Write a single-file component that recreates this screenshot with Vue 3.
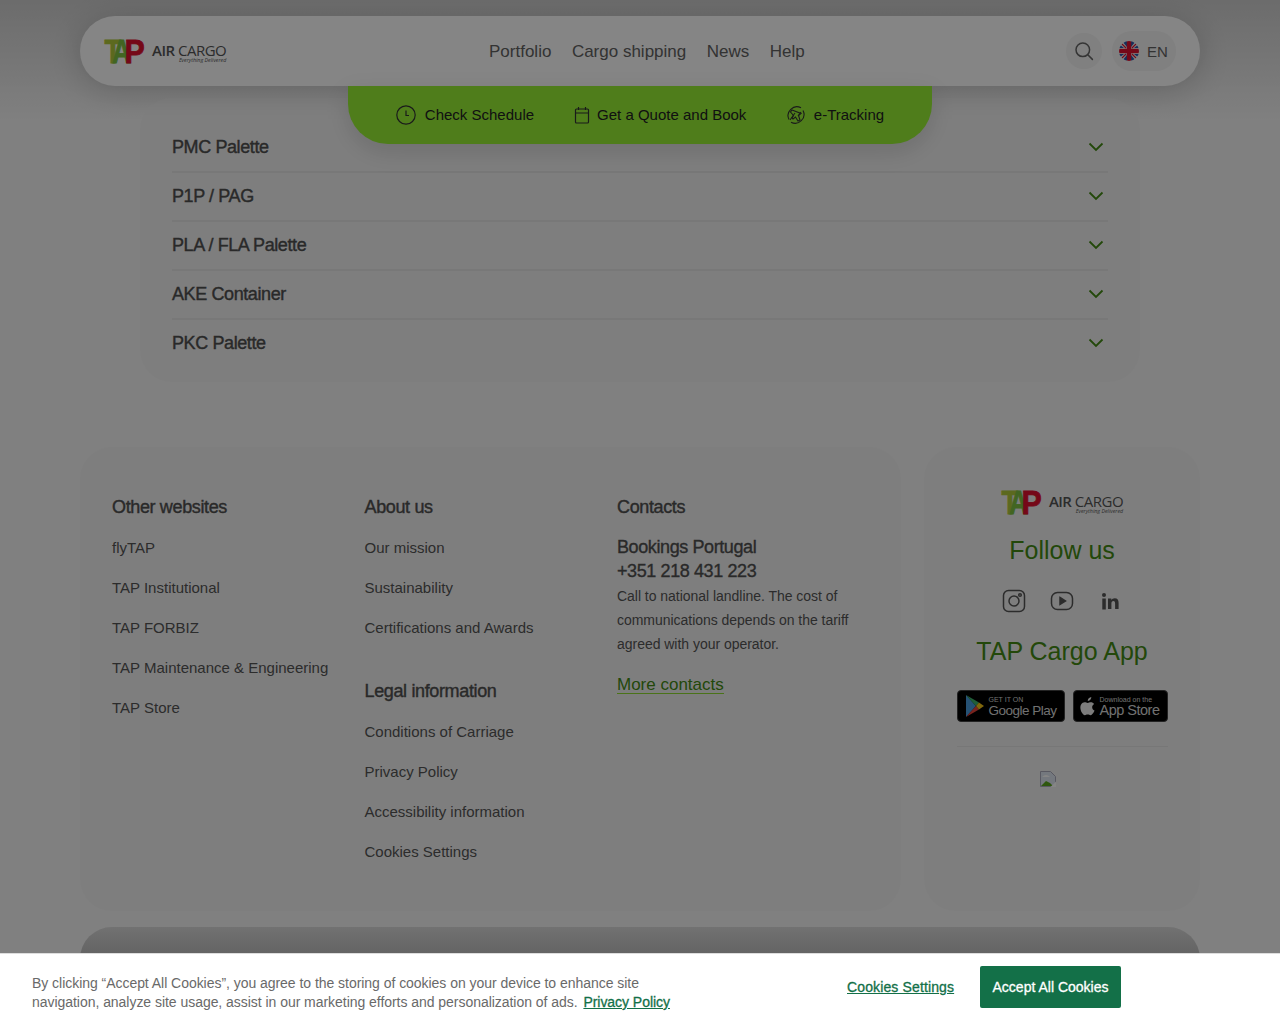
<script setup>
const navLinks = ['Portfolio', 'Cargo shipping', 'News', 'Help']
const accordion = ['PMC Palette', 'P1P / PAG', 'PLA / FLA Palette', 'AKE Container', 'PKC Palette']
const otherSites = ['flyTAP', 'TAP Institutional', 'TAP FORBIZ', 'TAP Maintenance & Engineering', 'TAP Store']
const about = ['Our mission', 'Sustainability', 'Certifications and Awards']
const legal = ['Conditions of Carriage', 'Privacy Policy', 'Accessibility information', 'Cookies Settings']
</script>

<template>
  <div class="page">
    <header class="topbar">
      <a class="logo">
        <svg class="logo-mark" viewBox="0 0 44 25" width="44" height="25">
          <text transform="translate(0.500 24.300) scale(.84 1)" class="mark t">T</text>
          <text transform="translate(8 24.300) scale(.8 1)" class="mark a">A</text>
          <text transform="translate(20.500 24.300) scale(.92 1)" class="mark p">P</text>
        </svg>
        <span class="logo-text">
          <span class="logo-name"><b>AIR</b> CARGO</span>
          <i class="logo-tag">Everything Delivered</i>
        </span>
      </a>
      <nav class="nav">
        <a v-for="l in navLinks" :key="l">{{ l }}</a>
      </nav>
      <div class="tools">
        <span class="search">
          <svg width="20" height="20" viewBox="0 0 20 20" fill="none" stroke="#666" stroke-width="1.5" stroke-linecap="round">
            <circle cx="8.800" cy="8.800" r="6.800" />
            <path d="M13.800 13.800l4.600 4.600" />
          </svg>
        </span>
        <span class="lang">
          <svg width="20" height="20" viewBox="0 0 20 20">
            <defs><clipPath id="flagclip"><circle cx="10" cy="10" r="10" /></clipPath></defs>
            <g clip-path="url(#flagclip)">
              <rect width="20" height="20" fill="#f4f4f4" />
              <path d="M3 0h5v6zM12 0h5l-5 6zM0 3l5 4H0zM20 3v4h-5zM0 13h5l-5 4zM15 13h5v4zM8 20H3l5-6zM12 20v-6l5 6z" fill="#2a5bb0" />
              <path d="M0 0l7 7M20 0l-7 7M0 20l7-7M20 20l-7-7" stroke="#e0102f" stroke-width="1.200" />
              <rect x="7.800" width="4.400" height="20" fill="#e0102f" />
              <rect y="7.800" width="20" height="4.400" fill="#e0102f" />
            </g>
          </svg>
          <span>EN</span>
        </span>
      </div>
      <div class="quick">
        <a>
          <svg width="20" height="20" viewBox="0 0 20 20" fill="none" stroke="#333" stroke-width="1.200">
            <circle cx="10" cy="10" r="9.200" />
            <path d="M10 5.500V10.500H13" />
          </svg>
          Check Schedule
        </a>
        <a>
          <svg width="16" height="18" viewBox="0 0 16 18" fill="none" stroke="#333" stroke-width="1.200">
            <rect x="1.500" y="3" width="13" height="14" rx="1" />
            <path d="M1.500 7h13M4.500 1v3M11.500 1v3" />
          </svg>
          Get a Quote and Book
        </a>
        <a>
          <svg width="20" height="20" viewBox="0 0 20 20" fill="none" stroke="#333" stroke-width="1.100">
            <path d="M3 14.500A8.800 8.800 0 0 1 15 2.800M17 5.500A8.800 8.800 0 0 1 5 17.200" />
            <path d="M6 5l9 3.500-2.500 2 1.500 4.500-2 1-2.500-4-2.500 2-1-1 1.500-2.500-3-3.500z" />
            <path d="M9 8l-5 7M12 11l3-4" />
          </svg>
          e-Tracking
        </a>
      </div>
    </header>

    <section class="accordion">
      <div v-for="item in accordion" :key="item" class="acc-row">
        <span>{{ item }}</span>
        <svg width="16" height="10" viewBox="0 0 16 10" fill="none" stroke="#438a14" stroke-width="1.800">
          <path d="M1.500 1.500L8 8l6.500-6.500" />
        </svg>
      </div>
    </section>

    <footer class="footer">
      <div class="foot-links">
        <div class="col">
          <h4>Other websites</h4>
          <a v-for="l in otherSites" :key="l">{{ l }}</a>
        </div>
        <div class="col">
          <h4>About us</h4>
          <a v-for="l in about" :key="l">{{ l }}</a>
          <h4 class="second">Legal information</h4>
          <a v-for="l in legal" :key="l">{{ l }}</a>
        </div>
        <div class="col">
          <h4>Contacts</h4>
          <div class="booking">Bookings Portugal<br />+351 218 431 223</div>
          <p class="note">Call to national landline. The cost of communications depends on the tariff agreed with your operator.</p>
          <a class="more">More contacts</a>
        </div>
      </div>
      <div class="foot-social">
        <a class="logo">
          <svg class="logo-mark" viewBox="0 0 44 25" width="44" height="25">
            <text transform="translate(0.500 24.300) scale(.84 1)" class="mark t">T</text>
            <text transform="translate(8 24.300) scale(.8 1)" class="mark a">A</text>
            <text transform="translate(20.500 24.300) scale(.92 1)" class="mark p">P</text>
          </svg>
          <span class="logo-text">
            <span class="logo-name"><b>AIR</b> CARGO</span>
            <i class="logo-tag">Everything Delivered</i>
          </span>
        </a>
        <h3 class="follow">Follow us</h3>
        <div class="social">
          <svg width="24" height="24" viewBox="0 0 24 24" fill="none" stroke="#555" stroke-width="1.500">
            <rect x="1.500" y="1.500" width="21" height="21" rx="5" />
            <circle cx="12" cy="12" r="5" />
            <circle cx="18" cy="6" r="1.300" />
          </svg>
          <svg width="24" height="24" viewBox="0 0 24 24" fill="none" stroke="#555" stroke-width="1.500">
            <rect x="1.500" y="3.500" width="21" height="17" rx="6" />
            <path d="M10 8.500l5.500 3.500-5.500 3.500z" fill="#555" />
          </svg>
          <svg width="24" height="24" viewBox="0 0 24 24" fill="#555">
            <circle cx="6" cy="6" r="2" />
            <rect x="4.300" y="9.500" width="3.500" height="11" />
            <path d="M10 9.500h3.300v1.500c.7-1.100 1.900-1.800 3.400-1.800 2.900 0 3.900 1.900 3.900 4.700v6.100h-3.500v-5.500c0-1.400-.4-2.400-1.700-2.400s-2 1-2 2.400v5.500H10z" />
          </svg>
        </div>
        <h3 class="app-title">TAP Cargo App</h3>
        <div class="badges">
          <a class="badge play">
            <svg width="20" height="24" viewBox="0 0 20 24">
              <path d="M1 1l10 11L1 23z" fill="#4a9de0" />
              <path d="M1 1l13 7.500L11 12z" fill="#3fb56b" />
              <path d="M1 23l13-7.500L11 12z" fill="#e8453c" />
              <path d="M14 8.500l5 3.500-5 3.500-3-3.500z" fill="#f5c518" />
            </svg>
            <span class="badge-text"><small>GET IT ON</small><b>Google Play</b></span>
          </a>
          <a class="badge store">
            <svg width="16" height="20" viewBox="0 0 16 20" fill="#eee">
              <path d="M11.300 1c.1 1-.3 2-1 2.700-.6.700-1.600 1.300-2.500 1.200-.1-1 .4-2 1-2.600C9.500 1.600 10.500 1.100 11.300 1zM14.500 14.600c-.4 1-.6 1.400-1.100 2.200-.7 1.100-1.700 2.400-2.900 2.400-1.100 0-1.400-.7-2.800-.7s-1.800.7-2.800.7c-1.200 0-2.100-1.200-2.800-2.300C.1 13.900-.1 10.300 1.100 8.400c.9-1.300 2.200-2.100 3.500-2.100s2.100.7 3.100.7 1.700-.7 3.200-.7c1.200 0 2.400.6 3.200 1.700-2.800 1.600-2.400 5.500.4 6.600z" />
            </svg>
            <span class="badge-text"><small>Download on the</small><b>App Store</b></span>
          </a>
        </div>
        <div class="divider"></div>
        <svg class="broken" width="16" height="16" viewBox="0 0 16 16">
          <path d="M.5.500h10l5 5v10H.500z" fill="#dfe6f2" stroke="#aab" stroke-width="1" />
          <path d="M1 15l5-5 4 2 3 3z" fill="#5aa81c" />
          <path d="M2 6q4-4 8 0z" fill="#fff" />
          <path d="M10.500 16L16 10.500V16z" fill="#fff" />
        </svg>
      </div>
    </footer>
    <div class="bottom-bar"></div>

    <div class="overlay"></div>

    <div class="cookies">
      <p>By clicking “Accept All Cookies”, you agree to the storing of cookies on your device to enhance site navigation, analyze site usage, assist in our marketing efforts and personalization of ads. <a>Privacy Policy</a></p>
      <a class="settings">Cookies Settings</a>
      <button class="accept">Accept All Cookies</button>
    </div>
  </div>
</template>

<style>
html, body {
  margin: 0;
  background: #f5f5f5;
}
</style>

<style scoped>
.page {
  position: relative;
  height: 1024px;
  overflow: hidden;
  padding-top: 98px;
  box-sizing: border-box;
  font-family: "Liberation Sans", Arial, sans-serif;
  background: linear-gradient(#cfcfcf, #f5f5f5 120px);
}

a {
  cursor: pointer;
}

.topbar {
  position: absolute;
  top: 16px;
  left: 80px;
  width: 1120px;
  height: 70px;
  box-sizing: border-box;
  padding: 0 24px;
  display: flex;
  align-items: center;
  border-radius: 35px;
  background: #fff;
  box-shadow: 0 4px 30px rgba(0, 0, 0, 0.18);
  z-index: 2;
}

.logo {
  display: flex;
  align-items: flex-start;
  gap: 4px;
}

.logo-mark {
  display: block;
  overflow: visible;
}

.mark {
  font-family: "Liberation Sans", Arial, sans-serif;
  font-weight: 700;
  font-size: 33px;
  stroke-width: 0.8px;
}

.mark.t {
  fill: #b0c93a;
  stroke: #b0c93a;
}

.mark.a {
  fill: #7fc241;
  stroke: #7fc241;
}

.mark.p {
  fill: #e0102f;
  stroke: #e0102f;
}

.logo-text {
  display: flex;
  flex-direction: column;
  font-family: "Open Sans", sans-serif;
  color: #555;
  padding-top: 3px;
}

.logo-name {
  font-size: 15px;
  line-height: 17px;
  letter-spacing: -0.5px;
  white-space: nowrap;
}

.logo-name b {
  font-weight: 600;
}

.logo-tag {
  align-self: flex-end;
  font-size: 5.300px;
  line-height: 6px;
  margin-top: -2px;
}

.nav {
  position: absolute;
  left: 409px;
  top: 0;
  height: 70px;
  padding-top: 2px;
  box-sizing: border-box;
  display: flex;
  align-items: center;
  gap: 20.500px;
  font-size: 17px;
  color: #626262;
}

.tools {
  margin-left: auto;
  display: flex;
  align-items: center;
  gap: 10px;
}

.search {
  width: 36px;
  height: 36px;
  border-radius: 50%;
  background: #f5f5f5;
  display: flex;
  align-items: center;
  justify-content: center;
}

.lang {
  height: 40px;
  width: 64px;
  box-sizing: border-box;
  padding-left: 7px;
  border-radius: 20px;
  background: #f5f5f5;
  display: flex;
  align-items: center;
  gap: 8px;
  font-size: 15px;
  color: #626262;
}

.quick {
  position: absolute;
  top: 70px;
  left: 268px;
  width: 584px;
  height: 58px;
  box-sizing: border-box;
  padding-bottom: 1px;
  display: flex;
  align-items: center;
  justify-content: center;
  gap: 39.500px;
  border-radius: 0 0 40px 40px;
  background: #97f035;
  box-shadow: 0 8px 24px rgba(0, 0, 0, 0.12);
  font-size: 15px;
  color: #222;
}

.quick a {
  display: flex;
  align-items: center;
  gap: 8px;
}

.quick a:first-child {
  gap: 9px;
}

.quick a:nth-child(2) {
  gap: 7.500px;
}

.quick svg {
  flex: none;
}

.accordion {
  width: 1000px;
  box-sizing: border-box;
  margin: 0 auto;
  padding: 26px 32px 12px;
  border-radius: 32px;
  background: #f2f2f2;
  height: 284px;
}

.acc-row {
  height: 49px;
  box-sizing: border-box;
  display: flex;
  align-items: center;
  justify-content: space-between;
  padding-right: 4px;
  border-bottom: 2px solid #e6e6e6;
  font-size: 18px;
  letter-spacing: -0.4px;
  color: #505050;
  -webkit-text-stroke: 0.4px #505050;
}

.acc-row svg {
  margin-bottom: 2px;
}

.acc-row:last-child {
  border-bottom-color: transparent;
}

.footer {
  margin: 65px 80px 0;
  display: flex;
  gap: 23px;
  height: 464px;
}

.foot-links {
  width: 821px;
  box-sizing: border-box;
  padding: 50px 32px 0;
  display: flex;
  border-radius: 32px;
  background: #f2f2f2;
}

.col {
  width: 252.500px;
  flex: none;
  display: flex;
  flex-direction: column;
  align-items: flex-start;
  color: #555;
  padding-right: 6px;
  box-sizing: border-box;
}

.col h4 {
  margin: 0 0 10px;
  height: 21px;
  line-height: 21px;
  font-size: 18px;
  font-weight: 400;
  letter-spacing: -0.36px;
  color: #505050;
  -webkit-text-stroke: 0.4px #505050;
}

.col h4.second {
  margin-top: 33px;
}

.col a {
  height: 40px;
  line-height: 40px;
  font-size: 15px;
  white-space: nowrap;
}

.booking {
  font-size: 18px;
  line-height: 24px;
  letter-spacing: -0.4px;
  color: #505050;
  -webkit-text-stroke: 0.35px #505050;
  margin-top: 7px;
}

.note {
  margin: 1px 0 0;
  font-size: 14px;
  line-height: 24px;
  letter-spacing: -0.03px;
}

.col a.more {
  margin-top: 19px;
  height: 18px;
  line-height: 20px;
  font-size: 17px;
  color: #438a14;
  border-bottom: 1px solid #8fdc2e;
}

.foot-social {
  width: 276px;
  box-sizing: border-box;
  padding: 43px 33px 0;
  display: flex;
  flex-direction: column;
  align-items: center;
  border-radius: 32px;
  background: #f2f2f2;
}

.follow,
.app-title {
  margin: 0;
  font-size: 25px;
  line-height: 30px;
  font-weight: 400;
  color: #438a14;
}

.follow {
  margin-top: 20px;
}

.social {
  margin-top: 24px;
  display: flex;
  gap: 24px;
}

.app-title {
  margin-top: 23px;
}

.badges {
  margin-top: 24px;
  display: flex;
  gap: 8px;
  width: 211px;
}

.badge {
  height: 32px;
  box-sizing: border-box;
  border-radius: 4px;
  background: #000;
  border: 1px solid #444;
  display: flex;
  align-items: center;
  color: #d8d8d8;
}

.badge.play {
  width: 108px;
  gap: 4px;
  padding-left: 7px;
}

.badge.store {
  width: 95px;
  gap: 4px;
  padding-left: 6px;
}

.badge-text {
  display: flex;
  flex-direction: column;
  white-space: nowrap;
}

.badge-text small {
  font-size: 7px;
  line-height: 7px;
  margin-top: 2px;
}

.badge-text b {
  font-weight: 400;
  font-size: 14.500px;
  line-height: 15px;
  letter-spacing: -0.5px;
}

.badge.play b {
  font-size: 13.500px;
}

.divider {
  margin-top: 24px;
  width: 211px;
  height: 1px;
  background: #e4e4e4;
}

.broken {
  margin-top: 24px;
  margin-right: 29px;
}

.bottom-bar {
  margin: 16px 80px 0;
  height: 120px;
  border-radius: 32px 32px 0 0;
  background: linear-gradient(#dadada, #bcbcbc 30px);
}

.overlay {
  position: absolute;
  inset: 0;
  background: rgba(0, 0, 0, 0.48);
  z-index: 5;
}

.cookies {
  position: absolute;
  left: 0;
  right: 0;
  bottom: 0;
  height: 71px;
  box-sizing: border-box;
  background: #fff;
  z-index: 6;
  border-top: 1px solid #ddd;
}

.cookies p {
  position: absolute;
  left: 32px;
  top: 20px;
  width: 660px;
  margin: 0;
  font-size: 14px;
  line-height: 19px;
  letter-spacing: -0.04px;
  color: #696969;
}

.cookies p a {
  margin-left: 2px;
  color: #137048;
  text-decoration: underline;
  -webkit-text-stroke: 0.3px #137048;
}

.settings {
  position: absolute;
  left: 847px;
  top: 24px;
  font-size: 14px;
  line-height: 18px;
  letter-spacing: 0.13px;
  color: #137048;
  text-decoration: underline;
  -webkit-text-stroke: 0.3px #137048;
}

.accept {
  position: absolute;
  left: 980px;
  top: 12px;
  width: 141px;
  height: 42px;
  border: 0;
  border-radius: 2px;
  padding: 0;
  background: #137048;
  color: #fff;
  font-family: inherit;
  font-size: 14px;
  -webkit-text-stroke: 0.3px #fff;
}
</style>
